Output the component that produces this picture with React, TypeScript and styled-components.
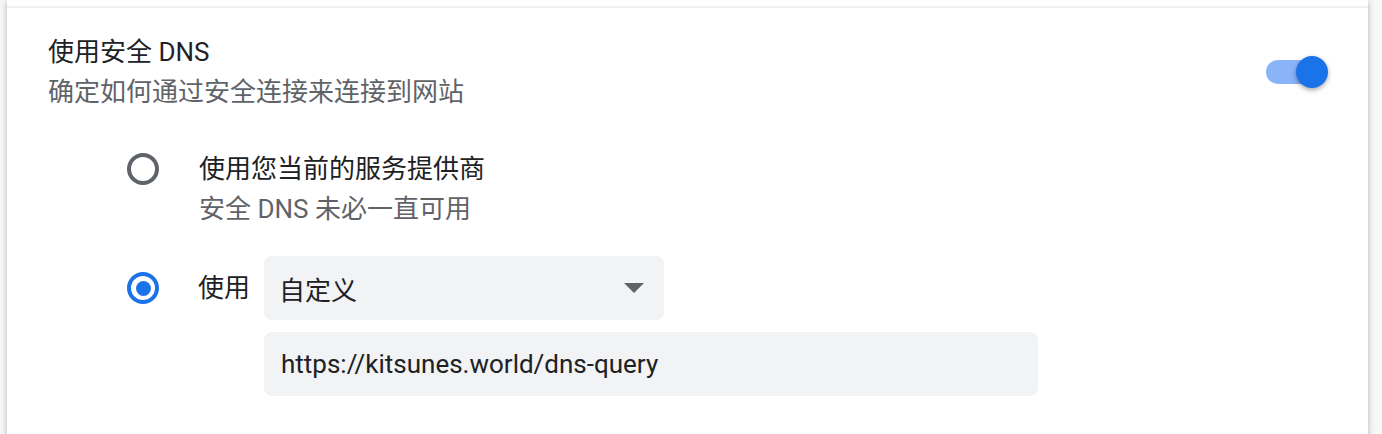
import React, { useState } from 'react'
import styled, { createGlobalStyle } from 'styled-components'

const GlobalStyle = createGlobalStyle`
  html, body {
    margin: 0;
    padding: 0;
    background: #f8f9fa;
  }
  body {
    font-family: Roboto, "Noto Sans CJK SC", "Noto Sans", sans-serif;
    font-size: 26px;
    color: #202124;
    -webkit-font-smoothing: antialiased;
  }
`

const Card = styled.div`
  margin-left: 7px;
  width: 1361px;
  height: 434px;
  background: #ffffff;
  box-shadow: 0 2px 4px 0 rgba(60, 64, 67, 0.25), 0 2px 8px 2px rgba(60, 64, 67, 0.12);
  padding-top: 6px;
  box-sizing: border-box;
`

const SettingRow = styled.div`
  display: flex;
  align-items: center;
  border-top: 2px solid #f0f0f0;
  padding: 24px 40px 0 40px;
`

const RowText = styled.div`
  flex: 1;
  display: flex;
  flex-direction: column;
`

const Label = styled.div`
  line-height: 40px;
  color: #202124;
  margin-left: 1px;
`

const SubLabel = styled.div`
  line-height: 40px;
  color: #5f6368;
  margin-left: 1px;
`

const ToggleTrack = styled.button<{ $on: boolean }>`
  position: relative;
  width: 56px;
  height: 24px;
  border: none;
  padding: 0;
  margin-right: 6px;
  border-radius: 12px;
  background: ${p => (p.$on ? '#8ab4f8' : '#bdc1c6')};
  cursor: pointer;
`

const ToggleKnob = styled.span<{ $on: boolean }>`
  position: absolute;
  top: -4px;
  left: ${p => (p.$on ? '30px' : '-6px')};
  width: 32px;
  height: 32px;
  border-radius: 50%;
  background: ${p => (p.$on ? '#1a73e8' : '#ffffff')};
  box-shadow: 0 2px 5px rgba(0, 0, 0, 0.35);
`

const RadioGroup = styled.div`
  display: flex;
  flex-direction: column;
  gap: 27px;
  padding: 37px 40px 0 120px;
`

const Option = styled.div`
  display: flex;
  align-items: flex-start;
`

const RadioSlot = styled.div<{ $h: number }>`
  height: ${p => p.$h}px;
  width: 32px;
  display: flex;
  align-items: center;
  margin-right: 39px;
  flex-shrink: 0;
`

const RadioCircle = styled.span<{ $checked: boolean }>`
  box-sizing: border-box;
  width: 32px;
  height: 32px;
  border-radius: 50%;
  border: 4px solid ${p => (p.$checked ? '#1a73e8' : '#5f6368')};
  display: flex;
  align-items: center;
  justify-content: center;
  cursor: pointer;

  &::after {
    content: '';
    width: 15px;
    height: 15px;
    border-radius: 50%;
    background: #1a73e8;
    display: ${p => (p.$checked ? 'block' : 'none')};
  }
`

const OptionText = styled.div`
  display: flex;
  flex-direction: column;
`

const UseLabel = styled.div`
  line-height: 64px;
  margin-right: 14px;
  color: #202124;
`

const Fields = styled.div`
  display: flex;
  flex-direction: column;
  gap: 12px;
`

const Select = styled.div`
  width: 400px;
  height: 64px;
  box-sizing: border-box;
  border-radius: 8px;
  background: #f1f3f4;
  display: flex;
  align-items: center;
  justify-content: space-between;
  padding: 0 20px 0 15px;
  color: #202124;
`

const Arrow = styled.svg`
  width: 20px;
  height: 10px;
`

const TextField = styled.div`
  width: 774px;
  height: 64px;
  box-sizing: border-box;
  border-radius: 8px;
  background: #f1f3f4;
  display: flex;
  align-items: center;
  padding: 0 17px;
  color: #202124;
`

export default function App() {
  const [on, setOn] = useState(true)
  const [choice, setChoice] = useState<'auto' | 'custom'>('custom')

  return (
    <>
      <GlobalStyle />
      <Card>
        <SettingRow>
          <RowText>
            <Label>使用安全 DNS</Label>
            <SubLabel>确定如何通过安全连接来连接到网站</SubLabel>
          </RowText>
          <ToggleTrack $on={on} onClick={() => setOn(!on)}>
            <ToggleKnob $on={on} />
          </ToggleTrack>
        </SettingRow>
        <RadioGroup>
          <Option>
            <RadioSlot $h={40}>
              <RadioCircle $checked={choice === 'auto'} onClick={() => setChoice('auto')} />
            </RadioSlot>
            <OptionText>
              <Label>使用您当前的服务提供商</Label>
              <SubLabel>安全 DNS 未必一直可用</SubLabel>
            </OptionText>
          </Option>
          <Option>
            <RadioSlot $h={64}>
              <RadioCircle $checked={choice === 'custom'} onClick={() => setChoice('custom')} />
            </RadioSlot>
            <UseLabel>使用</UseLabel>
            <Fields>
              <Select>
                <span>自定义</span>
                <Arrow viewBox="0 0 20 10">
                  <path d="M0 0 L20 0 L10 10 Z" fill="#5f6368" />
                </Arrow>
              </Select>
              <TextField>https://kitsunes.world/dns-query</TextField>
            </Fields>
          </Option>
        </RadioGroup>
      </Card>
    </>
  )
}
